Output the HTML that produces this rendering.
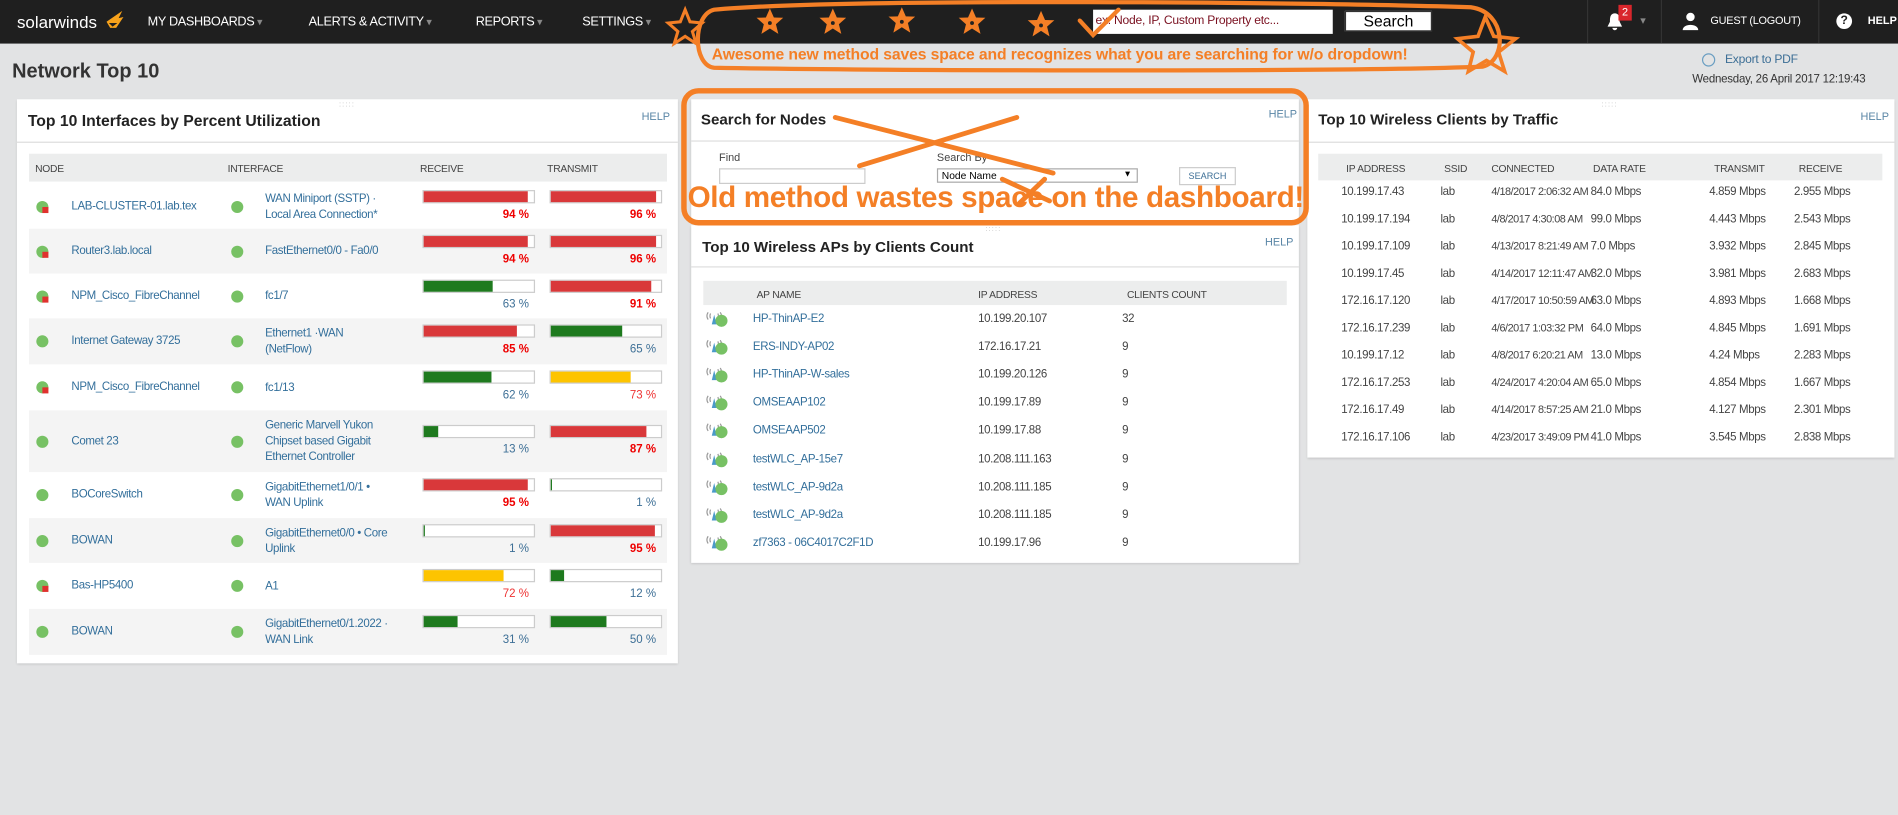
<!DOCTYPE html>
<html><head><meta charset="utf-8">
<style>
*{box-sizing:border-box;margin:0;padding:0}
html,body{width:1898px;height:814px;overflow:hidden;background:#e2e3e4;font-family:"Liberation Sans",sans-serif}
#s{position:absolute;left:0;top:0;width:1568px;height:673px;transform:scale(1.2105);transform-origin:0 0}
.a{position:absolute;white-space:nowrap}
.nav{position:absolute;left:0;top:0;width:1568px;height:36px;background:#1f1f1f}
.m{color:#fff;font-size:10.5px;top:12px;letter-spacing:-0.3px}
.m:after{content:" \25BE";color:#888;font-size:9px}
.panel{position:absolute;background:#fff;box-shadow:0 1px 2px rgba(0,0,0,.15)}
.pt{font-weight:bold;font-size:12.5px;color:#222}
.help{font-size:9px;color:#5a86a6}
.th{position:absolute;background:#eceded;height:23px}
.th span{position:absolute;top:7px;font-size:8.5px;color:#444;letter-spacing:-0.2px}
.lk{color:#336f9b;font-size:9.5px;letter-spacing:-0.3px}
.tx{color:#444;font-size:9.5px;letter-spacing:-0.3px}
.dot{position:absolute;width:10px;height:10px;border-radius:50%;background:#77c164}
.warn:after{content:"";position:absolute;left:5px;top:5px;width:5px;height:5px;background:#e0312e}
.bar{position:absolute;width:93px;height:11px;border:1px solid #ccc;background:#fff}
.bar i{display:block;height:100%}
.pc{position:absolute;font-size:9.5px;text-align:right;width:93px}
.R{color:#e00;font-weight:bold}.G{color:#3d6f96}.Y{color:#e33}
.wi{position:absolute;width:18px;height:12px}
.o{color:#f47f26;font-weight:bold}
</style></head><body>
<div id="s">
<div class="nav"></div>
<div class="a" style="left:14px;top:10px;color:#fff;font-size:14px">solarwinds</div>
<svg class="a" style="left:87px;top:6px" width="16" height="22" viewBox="0 0 16 22"><path d="M1 12 L14 3 L11 9 L15 8 L9 17 L4 17 Z" fill="#f7a21b"/><path d="M3 13 L10 13 L6 16Z" fill="#1f1f1f"/></svg>
<div class="a m" style="left:122px">MY DASHBOARDS</div>
<div class="a m" style="left:255px">ALERTS &amp; ACTIVITY</div>
<div class="a m" style="left:393px">REPORTS</div>
<div class="a m" style="left:481px">SETTINGS</div>
<div class="a" style="left:903px;top:8px;width:198px;height:20px;background:#fff"></div>
<div class="a" style="left:905px;top:12px;font-size:10px;letter-spacing:-0.2px;color:#7a1020">ex: Node, IP, Custom Property etc...</div>
<div class="a" style="left:1111px;top:9px;width:72px;height:17px;background:#fff;border:1px solid #333;font-size:13px;text-align:center;line-height:15px">Search</div>
<div class="a" style="left:1311px;top:0;width:1px;height:36px;background:#333"></div>
<div class="a" style="left:1372px;top:0;width:1px;height:36px;background:#333"></div>
<div class="a" style="left:1502px;top:0;width:1px;height:36px;background:#333"></div>
<svg class="a" style="left:1327px;top:10px" width="14" height="16" viewBox="0 0 14 16"><path d="M7 1 C3 1 3 5 3 8 L1 12 L13 12 L11 8 C11 5 11 1 7 1Z M5 13 A2 2 0 0 0 9 13Z" fill="#fff"/></svg>
<div class="a" style="left:1337px;top:4px;width:11px;height:13px;background:#d9262c;color:#fff;font-size:9px;text-align:center;line-height:13px">2</div>
<div class="a" style="left:1355px;top:12px;color:#888;font-size:9px">&#9662;</div>
<svg class="a" style="left:1390px;top:10px" width="13" height="15" viewBox="0 0 13 15"><circle cx="6.5" cy="4" r="3.5" fill="#fff"/><path d="M0 15 C0 9 13 9 13 15Z" fill="#fff"/></svg>
<div class="a" style="left:1413px;top:12px;color:#fff;font-size:9px;letter-spacing:-0.2px">GUEST (LOGOUT)</div>
<div class="a" style="left:1517px;top:11px;width:13px;height:13px;border-radius:50%;background:#fff;color:#1f1f1f;font-size:10px;font-weight:bold;text-align:center;line-height:13px">?</div>
<div class="a" style="left:1543px;top:12px;color:#fff;font-size:9px;font-weight:bold">HELP</div>

<div class="a" style="left:10px;top:50px;font-size:16.5px;font-weight:bold;color:#333">Network Top 10</div>
<div class="a" style="left:1406px;top:44px;width:11px;height:11px;border:1px solid #6a9ec2;border-radius:50%"></div>
<div class="a" style="left:1425px;top:44px;font-size:10px;color:#3d6f96;letter-spacing:-0.2px">Export to PDF</div>
<div class="a" style="left:1398px;top:60px;font-size:9.5px;color:#333;letter-spacing:-0.2px">Wednesday, 26 April 2017 12:19:43</div>

<!-- LEFT PANEL -->
<div class="panel" style="left:14px;top:82px;width:546px;height:466px"></div>
<div class="a" style="left:280px;top:84px;color:#bbb;font-size:6px;letter-spacing:1px">:::::</div>
<div class="a pt" style="left:23px;top:92px;font-size:13px">Top 10 Interfaces by Percent Utilization</div>
<div class="a help" style="left:530px;top:91px">HELP</div>
<div class="a" style="left:14px;top:117px;width:546px;height:1px;background:#ddd"></div>
<div class="th" style="left:24px;top:127px;width:527px"><span style="left:5px">NODE</span><span style="left:164px">INTERFACE</span><span style="left:323px">RECEIVE</span><span style="left:428px">TRANSMIT</span></div>
<div id="rows"></div>

<!-- MIDDLE SEARCH -->
<div class="panel" style="left:571px;top:82px;width:502px;height:101px"></div>
<div class="a pt" style="left:579px;top:92px">Search for Nodes</div>
<div class="a help" style="left:1048px;top:89px">HELP</div>
<div class="a" style="left:571px;top:116px;width:502px;height:1px;background:#ddd"></div>
<div class="a" style="left:594px;top:125px;font-size:9px;color:#444">Find</div>
<div class="a" style="left:594px;top:139px;width:121px;height:13px;border:1px solid #ccc"></div>
<div class="a" style="left:774px;top:125px;font-size:9px;color:#444">Search By</div>
<div class="a" style="left:774px;top:139px;width:166px;height:12px;border:1px solid #aaa;font-size:8.5px;padding-left:3px;line-height:10px">Node Name<span style="position:absolute;right:4px;font-size:7px">&#9660;</span></div>
<div class="a" style="left:974px;top:138px;width:47px;height:15px;border:1px solid #ccc;font-size:7.5px;color:#3d6f96;text-align:center;line-height:13px">SEARCH</div>

<!-- APs -->
<div class="panel" style="left:571px;top:186px;width:502px;height:279px"></div>
<div class="a" style="left:814px;top:187px;color:#bbb;font-size:6px;letter-spacing:1px">:::::</div>
<div class="a pt" style="left:580px;top:197px">Top 10 Wireless APs by Clients Count</div>
<div class="a help" style="left:1045px;top:195px">HELP</div>
<div class="a" style="left:571px;top:220px;width:502px;height:1px;background:#ddd"></div>
<div class="th" style="left:581px;top:232px;width:482px;height:20px"><span style="left:44px;top:6px">AP NAME</span><span style="left:227px;top:6px">IP ADDRESS</span><span style="left:350px;top:6px">CLIENTS COUNT</span></div>
<div id="aps"></div>

<!-- RIGHT -->
<div class="panel" style="left:1080px;top:82px;width:485px;height:296px"></div>
<div class="a" style="left:1323px;top:84px;color:#bbb;font-size:6px;letter-spacing:1px">:::::</div>
<div class="a pt" style="left:1089px;top:92px">Top 10 Wireless Clients by Traffic</div>
<div class="a help" style="left:1537px;top:91px">HELP</div>
<div class="a" style="left:1080px;top:117px;width:485px;height:1px;background:#ddd"></div>
<div class="th" style="left:1089px;top:127px;width:466px;height:22px"><span style="left:23px">IP ADDRESS</span><span style="left:104px">SSID</span><span style="left:143px">CONNECTED</span><span style="left:227px">DATA RATE</span><span style="left:327px">TRANSMIT</span><span style="left:397px">RECEIVE</span></div>
<div id="wc"></div>

<!-- orange annotations -->
<svg class="a" style="left:0;top:0" width="1568" height="673" viewBox="0 0 1568 673">
<defs><path id="st" d="M0 -11 L3.3 -3.5 L11 -3.3 L5 2 L7 10 L0 5.5 L-7 10 L-5 2 L-11 -3.3 L-3.3 -3.5Z"/></defs>
<g fill="none" stroke="#f47f26" stroke-width="4" stroke-linecap="round">
<path d="M590 8 C700 -2 1100 2 1215 6 C1245 10 1245 50 1225 55 C1100 60 700 58 590 56 C572 54 572 12 590 8Z" stroke-width="3.5"/>
<rect x="565" y="75" width="514" height="109" rx="12" stroke-width="4.5"/>
<path d="M690 97 L870 143"/><path d="M840 97 L710 137"/>
<path d="M828 148 L867 166"/><path d="M863 148 L842 168"/>
<path d="M892 17 L903 29 L924 8" stroke-width="3.5"/>
<path d="M566 8 L570 18 L580 19 L572 26 L575 36 L566 30 L557 36 L560 26 L552 19 L562 18Z" stroke-width="2.5"/>
<path d="M1227 14 L1234 30 L1252 32 L1238 43 L1243 59 L1228 50 L1213 59 L1217 43 L1204 32 L1221 30Z" stroke-width="3"/>
</g>
<g fill="#f47f26"><use href="#st" x="636" y="18"/><use href="#st" x="688" y="18"/><use href="#st" x="745" y="17"/><use href="#st" x="803" y="18"/><use href="#st" x="860" y="20"/></g>
<g fill="#222"><circle cx="636" cy="19" r="1.6"/><circle cx="688" cy="19" r="1.6"/><circle cx="745" cy="18" r="1.6"/><circle cx="803" cy="19" r="1.6"/><circle cx="860" cy="21" r="1.6"/></g>
</svg>
<div class="a o" style="left:588px;top:37px;font-size:13px;letter-spacing:-0.1px">Awesome new method saves space and recognizes what you are searching for w/o dropdown!</div>
<div class="a o" style="left:568px;top:150px;font-size:24.5px;letter-spacing:-0.3px">Old method wastes space on the dashboard!</div>
</div>
<script>
var L=[["LAB-CLUSTER-01.lab.tex",1,"WAN Miniport (SSTP) ·<br>Local Area Connection*",94,"R",96,"R"],
["Router3.lab.local",1,"FastEthernet0/0 - Fa0/0",94,"R",96,"R"],
["NPM_Cisco_FibreChannel",1,"fc1/7",63,"G",91,"R"],
["Internet Gateway 3725",0,"Ethernet1 ·WAN<br>(NetFlow)",85,"R",65,"G"],
["NPM_Cisco_FibreChannel",1,"fc1/13",62,"G",73,"Y"],
["Comet 23",0,"Generic Marvell Yukon<br>Chipset based Gigabit<br>Ethernet Controller",13,"G",87,"R"],
["BOCoreSwitch",0,"GigabitEthernet1/0/1 •<br>WAN Uplink",95,"R",1,"G"],
["BOWAN",0,"GigabitEthernet0/0 • Core<br>Uplink",1,"G",95,"R"],
["Bas-HP5400",1,"A1",72,"Y",12,"G"],
["BOWAN",0,"GigabitEthernet0/1.2022 ·<br>WAN Link",31,"G",50,"G"]];
var T=[152,189,226,263,301,339,390,428,465,503,541],h="";
var col={R:"#d9383a",G:"#1e7a1e",Y:"#fdc400"};
L.forEach(function(r,i){var t=T[i],H=T[i+1]-t,c=t+H/2;
if(i%2)h+='<div class="a" style="left:24px;top:'+t+'px;width:527px;height:'+H+'px;background:#f4f4f4"></div>';
h+='<div class="dot'+(r[1]?' warn':'')+'" style="left:30px;top:'+(c-5)+'px"></div>';
h+='<div class="a lk" style="left:59px;top:'+(c-6)+'px">'+r[0]+'</div>';
h+='<div class="dot" style="left:191px;top:'+(c-5)+'px"></div>';
var n=r[2].split("<br>").length;
h+='<div class="a lk" style="left:219px;line-height:13px;top:'+(c-n*6.5)+'px">'+r[2]+'</div>';
[[349,r[3],r[4]],[454,r[5],r[6]]].forEach(function(b){
h+='<div class="bar" style="left:'+b[0]+'px;top:'+(c-14)+'px"><i style="width:'+Math.max(b[1],1.5)+'%;background:'+col[b[2]]+'"></i></div>';
h+='<div class="pc '+b[2]+'" style="left:'+(b[0]-5)+'px;top:'+(c+1)+'px">'+b[1]+' %</div>';});});
document.getElementById("rows").outerHTML=h;
var wi='<svg class="wi" viewBox="0 0 18 12"><path d="M3 1 Q1 4 3 7 M5 2 Q4 4 5 6 M11 2 Q12 4 11 6 M13 1 Q15 4 13 7" stroke="#999" fill="none"/><path d="M8 3 L6 11 L10 11Z" fill="#4a9ac9"/></svg>';
var A=[["HP-ThinAP-E2","10.199.20.107","32"],["ERS-INDY-AP02","172.16.17.21","9"],["HP-ThinAP-W-sales","10.199.20.126","9"],["OMSEAAP102","10.199.17.89","9"],["OMSEAAP502","10.199.17.88","9"],["testWLC_AP-15e7","10.208.111.163","9"],["testWLC_AP-9d2a","10.208.111.185","9"],["testWLC_AP-9d2a","10.208.111.185","9"],["zf7363 - 06C4017C2F1D","10.199.17.96","9"]];
h="";A.forEach(function(r,i){var c=264+i*23.1;
h+='<div class="a" style="left:582px;top:'+(c-7)+'px">'+wi+'</div><div class="dot" style="left:591px;top:'+(c-4)+'px"></div>';
h+='<div class="a lk" style="left:622px;top:'+(c-6)+'px">'+r[0]+'</div><div class="a tx" style="left:808px;top:'+(c-6)+'px">'+r[1]+'</div><div class="a tx" style="left:927px;top:'+(c-6)+'px">'+r[2]+'</div>';});
document.getElementById("aps").outerHTML=h;
var W=[["10.199.17.43","4/18/2017 2:06:32 AM","84.0 Mbps","4.859 Mbps","2.955 Mbps"],["10.199.17.194","4/8/2017 4:30:08 AM","99.0 Mbps","4.443 Mbps","2.543 Mbps"],["10.199.17.109","4/13/2017 8:21:49 AM","7.0 Mbps","3.932 Mbps","2.845 Mbps"],["10.199.17.45","4/14/2017 12:11:47 AM","32.0 Mbps","3.981 Mbps","2.683 Mbps"],["172.16.17.120","4/17/2017 10:50:59 AM","63.0 Mbps","4.893 Mbps","1.668 Mbps"],["172.16.17.239","4/6/2017 1:03:32 PM","64.0 Mbps","4.845 Mbps","1.691 Mbps"],["10.199.17.12","4/8/2017 6:20:21 AM","13.0 Mbps","4.24 Mbps","2.283 Mbps"],["172.16.17.253","4/24/2017 4:20:04 AM","65.0 Mbps","4.854 Mbps","1.667 Mbps"],["172.16.17.49","4/14/2017 8:57:25 AM","21.0 Mbps","4.127 Mbps","2.301 Mbps"],["172.16.17.106","4/23/2017 3:49:09 PM","41.0 Mbps","3.545 Mbps","2.838 Mbps"]];
h="";W.forEach(function(r,i){var c=159+i*22.5,t=c-6;
h+='<div class="a" style="left:1087px;top:'+(c-7)+'px;width:14px;overflow:hidden">'+wi+'</div>';
h+='<div class="a tx" style="left:1108px;top:'+t+'px">'+r[0]+'</div><div class="a tx" style="left:1190px;top:'+t+'px">lab</div><div class="a tx" style="left:1232px;top:'+t+'px;font-size:9px;letter-spacing:-0.4px">'+r[1]+'</div><div class="a tx" style="left:1314px;top:'+t+'px">'+r[2]+'</div><div class="a tx" style="left:1412px;top:'+t+'px">'+r[3]+'</div><div class="a tx" style="left:1482px;top:'+t+'px">'+r[4]+'</div>';});
document.getElementById("wc").outerHTML=h;
</script>
</body></html>
